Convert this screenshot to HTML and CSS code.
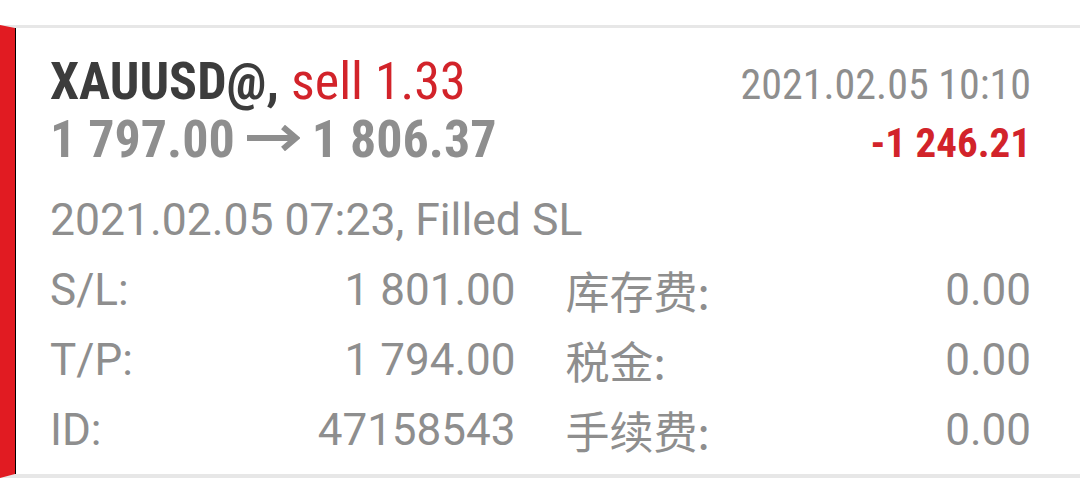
FILE: index.html
```html
<!DOCTYPE html>
<html lang="en">
  <head>
    <meta charset="UTF-8" />
    <meta name="viewport" content="width=device-width, initial-scale=1.0" />
    <title>Order history</title>

    <link rel="stylesheet" href="styles.css">
  </head>

  <body>
    <!-- closed order card -->
    <div class="order">
      <div class="head">
        <div class="headRow">
          <span class="symbol">XAUUSD@, <span class="sell">sell 1.33</span></span>
          <span class="closeTime">2021.02.05 10:10</span>
        </div>
        <div class="headRow">
          <span class="prices">1 797.00
            <svg class="arrow" width="53" height="26" viewBox="0 0 53 26">
              <path d="M0 13H49M36 2L49 13L36 24" fill="none" stroke="#8e8e8e" stroke-width="6" />
            </svg>
            1 806.37</span>
          <span class="profit">-1 246.21</span>
        </div>
      </div>

      <p class="openInfo">2021.02.05 07:23, Filled SL</p>

      <div class="details">
        <div class="field"><span>S/L:</span><span>1 801.00</span></div>
        <div class="field"><span class="cjk">库存费:</span><span>0.00</span></div>
        <div class="field"><span>T/P:</span><span>1 794.00</span></div>
        <div class="field"><span class="cjk">税金:</span><span>0.00</span></div>
        <div class="field"><span>ID:</span><span>47158543</span></div>
        <div class="field"><span class="cjk">手续费:</span><span>0.00</span></div>
      </div>
    </div>
  </body>
</html>
```

FILE: styles.css
```css
body {
  margin: 0;
  padding-top: 25px;
  background-color: #ffffff;
  font-family: Roboto, "Noto Sans CJK SC", sans-serif;
  color: #8e8e8e;
}

.order {
  border-top: 3px solid #e7e7e7;
  border-bottom: 4px solid #e7e7e7;
  border-left: 15px solid #e11b22;
  box-shadow: inset 1px 0 0 #000;
  padding: 25px 49px 9px 35px;
}

.headRow {
  display: flex;
  justify-content: space-between;
  align-items: baseline;
  height: 58px;
  line-height: 58px;
  font-family: "Roboto Condensed", Roboto, sans-serif;
}

.symbol {
  font-size: 52px;
  font-weight: 700;
  color: #3c3c3c;
}

.sell {
  font-weight: 400;
  color: #d2232a;
}

.closeTime {
  font-size: 42px;
  color: #8e8e8e;
}

.prices {
  font-size: 52px;
  font-weight: 700;
  color: #8e8e8e;
}

.arrow {
  vertical-align: 6px;
}

.profit {
  font-size: 41px;
  font-weight: 700;
  color: #d2232a;
}

.openInfo {
  margin: 16px 0 0;
  font-size: 44.5px;
  line-height: 70px;
}

.details {
  display: grid;
  grid-template-columns: 1fr 1fr;
  column-gap: 50px;
  font-size: 44px;
  line-height: 70px;
}

.field {
  display: flex;
  justify-content: space-between;
}

.cjk {
  font-family: "Noto Sans CJK SC", sans-serif;
}
```
